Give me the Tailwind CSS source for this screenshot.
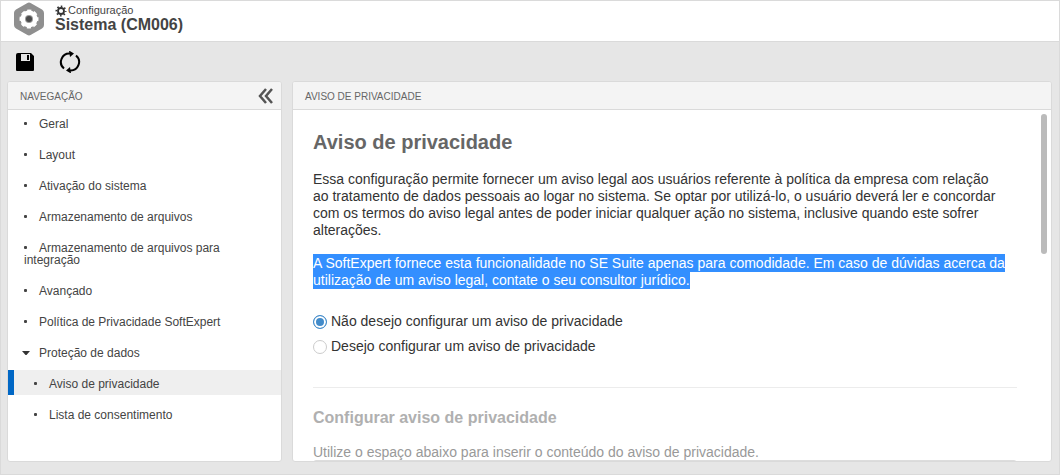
<!DOCTYPE html>
<html lang="pt-BR">
<head>
    <meta charset="UTF-8">
    <meta name="viewport" content="width=device-width, initial-scale=1.0">
    <title>Sistema (CM006)</title>
    <script src="https://cdn.jsdelivr.net/npm/@tailwindcss/browser@4"></script>
</head>
<body class="font-['Liberation_Sans',Arial,sans-serif] text-[#333] antialiased">
    <div class="h-screen flex flex-col bg-[#e6e6e6] border border-[#dadada]">
        <!-- Cabeçalho -->
        <header class="h-[41px] shrink-0 flex items-start gap-[10px] pl-3 pt-px bg-white border-b border-[#dadada]">
            <svg class="w-8 h-[34px]" viewBox="0 0 32 34" aria-hidden="true">
                <path d="M14 1.200Q16 0 18 1.200L29 7.500Q31 8.700 31 11V23Q31 25.300 29 26.500L18 32.800Q16 34 14 32.800L3 26.500Q1 25.300 1 23V11Q1 8.700 3 7.500Z" fill="#8f8f8f"/>
                <circle cx="16" cy="17" r="8.500" fill="#fff"/>
                <circle cx="16" cy="17" r="8.600" fill="none" stroke="#fff" stroke-width="1.800" stroke-dasharray="4.200 2.555" stroke-dashoffset="2.100"/>
                <circle cx="16" cy="17" r="4" fill="#999"/>
                <circle cx="16" cy="17" r="3" fill="#4a4a4a"/>
            </svg>
            <div class="pt-[2px]">
                <div class="flex items-center gap-px text-[11px] leading-[13px] text-[#444]">
                    <svg class="w-3 h-3" viewBox="0 0 12 12" fill="none" stroke="#333" aria-hidden="true">
                        <circle cx="6" cy="6" r="3" stroke-width="1.800"/>
                        <circle cx="6" cy="6" r="4.700" stroke-width="1.600" stroke-dasharray="1.600 2.091" stroke-dashoffset="0.800"/>
                    </svg>
                    <span>Configuração</span>
                </div>
                <h1 class="text-base leading-4 font-bold text-[#444]">Sistema (CM006)</h1>
            </div>
        </header>

        <!-- Barra de ferramentas -->
        <div class="h-[39px] shrink-0 flex items-center gap-6 pl-[14px]">
            <button type="button" aria-label="Salvar" class="w-5 h-5">
                <svg class="w-5 h-5" viewBox="0 0 20 20" aria-hidden="true">
                    <path fill-rule="evenodd" d="M3 1H16L19 4V18Q19 19 18 19H2Q1 19 1 18V3Q1 1 3 1ZM6 2V9H15V2ZM12 3H14V8H12Z"/>
                </svg>
            </button>
            <button type="button" aria-label="Atualizar" class="w-[22px] h-[22px]">
                <svg class="w-[22px] h-[22px]" viewBox="0 0 22 22" fill="none" stroke="#000" stroke-width="2" aria-hidden="true">
                    <path d="M5 17.500A8.500 8.500 0 0 1 11 2.500"/>
                    <path d="M17 4.500A8.500 8.500 0 0 1 11 19.500"/>
                    <path d="M10 -0.500L15 2.500L11 6Z M12 22.500L7 19.500L11 16Z" fill="#000" stroke="none"/>
                </svg>
            </button>
        </div>

        <main class="flex-1 min-h-0 flex gap-[10px] pl-[6px] pr-[7px] pb-3">
            <!-- Navegação -->
            <nav class="w-[275px] shrink-0 flex flex-col bg-white border border-[#dadada] rounded-[3px] overflow-hidden">
                <div class="h-7 shrink-0 flex items-center justify-between pl-3 pr-[7px] bg-[#f4f4f4] border-b border-[#dadada]">
                    <h2 class="text-[10px] leading-3 pt-[2px] text-[#666]">NAVEGAÇÃO</h2>
                    <button type="button" aria-label="Recolher">
                        <svg class="w-4 h-4" viewBox="0 0 16 16" fill="none" stroke="#555" stroke-width="2.500" aria-hidden="true">
                            <path d="M8 1L2 8L8 15M14 1L8 8L14 15"/>
                        </svg>
                    </button>
                </div>
                <ul class="flex flex-col gap-[6px] text-xs leading-3 text-[#444]">
                    <li><a href="#" class="block pt-2 pb-[5px] pl-4 pr-10"><span class="inline-block w-[3px] h-[3px] mr-3 mb-[2px] rounded-[1px] bg-[#444] align-middle"></span>Geral</a></li>
                    <li><a href="#" class="block pt-2 pb-[5px] pl-4 pr-10"><span class="inline-block w-[3px] h-[3px] mr-3 mb-[2px] rounded-[1px] bg-[#444] align-middle"></span>Layout</a></li>
                    <li><a href="#" class="block pt-2 pb-[5px] pl-4 pr-10"><span class="inline-block w-[3px] h-[3px] mr-3 mb-[2px] rounded-[1px] bg-[#444] align-middle"></span>Ativação do sistema</a></li>
                    <li><a href="#" class="block pt-2 pb-[5px] pl-4 pr-10"><span class="inline-block w-[3px] h-[3px] mr-3 mb-[2px] rounded-[1px] bg-[#444] align-middle"></span>Armazenamento de arquivos</a></li>
                    <li><a href="#" class="block pt-2 pb-[5px] pl-4 pr-10"><span class="inline-block w-[3px] h-[3px] mr-3 mb-[2px] rounded-[1px] bg-[#444] align-middle"></span>Armazenamento de arquivos para integração</a></li>
                    <li><a href="#" class="block pt-2 pb-[5px] pl-4 pr-10"><span class="inline-block w-[3px] h-[3px] mr-3 mb-[2px] rounded-[1px] bg-[#444] align-middle"></span>Avançado</a></li>
                    <li><a href="#" class="block pt-2 pb-[5px] pl-4 pr-10"><span class="inline-block w-[3px] h-[3px] mr-3 mb-[2px] rounded-[1px] bg-[#444] align-middle"></span>Política de Privacidade SoftExpert</a></li>
                    <li>
                        <a href="#" class="flex items-center gap-[9px] pt-2 pb-[5px] pl-[14px]">
                            <svg class="w-2 h-1" viewBox="0 0 8 4" fill="#333" aria-hidden="true"><path d="M0 0H8L4.500 4H3.500Z"/></svg>
                            Proteção de dados
                        </a>
                        <ul class="flex flex-col gap-[6px] pt-[6px]">
                            <li><a href="#" aria-current="page" class="block pt-2 pb-[5px] pl-5 border-l-[6px] border-[#0067c5] bg-[#efefef]"><span class="inline-block w-[3px] h-[3px] mr-3 mb-[2px] rounded-[1px] bg-[#444] align-middle"></span>Aviso de privacidade</a></li>
                            <li><a href="#" class="block pt-2 pb-[5px] pl-[26px]"><span class="inline-block w-[3px] h-[3px] mr-3 mb-[2px] rounded-[1px] bg-[#444] align-middle"></span>Lista de consentimento</a></li>
                        </ul>
                    </li>
                </ul>
            </nav>

            <!-- Aviso de privacidade -->
            <section class="relative flex-1 min-w-0 flex flex-col bg-white border border-[#dadada] rounded-[3px] overflow-hidden">
                <div class="h-7 shrink-0 flex items-center pl-3 bg-[#f4f4f4] border-b border-[#dadada]">
                    <h2 class="text-[10px] leading-3 pt-[2px] text-[#666]">AVISO DE PRIVACIDADE</h2>
                </div>
                <form class="flex-1 min-h-0 overflow-hidden pl-5 pr-[34px] pt-5 text-sm leading-[17px]">
                    <h3 class="text-xl leading-6 font-bold text-[#666]">Aviso de privacidade</h3>
                    <p class="mt-[17px]">Essa configuração permite fornecer um aviso legal aos usuários referente à política da empresa com relação<br>ao tratamento de dados pessoais ao logar no sistema. Se optar por utilizá-lo, o usuário deverá ler e concordar<br>com os termos do aviso legal antes de poder iniciar qualquer ação no sistema, inclusive quando este sofrer<br>alterações.</p>
                    <p class="mt-4"><mark class="py-px bg-[#338fff] text-white">A SoftExpert fornece esta funcionalidade no SE Suite apenas para comodidade. Em caso de dúvidas acerca da utilização de um aviso legal, contate o seu consultor jurídico.</mark></p>
                    <div class="flex flex-col gap-2 mt-6">
                        <label class="flex items-center gap-1">
                            <input type="radio" name="aviso" checked class="appearance-none w-[14px] h-[14px] rounded-full border border-[#ccc] checked:border-[#428bca] checked:bg-[#428bca] checked:shadow-[inset_0_0_0_2px_white]">
                            Não desejo configurar um aviso de privacidade
                        </label>
                        <label class="flex items-center gap-1">
                            <input type="radio" name="aviso" class="appearance-none w-[14px] h-[14px] rounded-full border border-[#ccc] checked:border-[#428bca] checked:bg-[#428bca] checked:shadow-[inset_0_0_0_2px_white]">
                            Desejo configurar um aviso de privacidade
                        </label>
                    </div>
                    <hr class="mt-8 border-[#ececec]">
                    <h4 class="mt-5 text-base leading-5 font-bold text-[#b0b0b0]">Configurar aviso de privacidade</h4>
                    <label for="conteudo" class="block mt-4 leading-4 text-[#999]">Utilize o espaço abaixo para inserir o conteúdo do aviso de privacidade.</label>
                    <textarea id="conteudo" disabled class="block w-full h-40 border border-[#ddd] rounded-[3px] resize-none"></textarea>
                </form>
                <div class="absolute right-1 top-8 w-[6px] h-[140px] rounded-full bg-[#bbb]"></div>
            </section>
        </main>
    </div>
</body>
</html>
